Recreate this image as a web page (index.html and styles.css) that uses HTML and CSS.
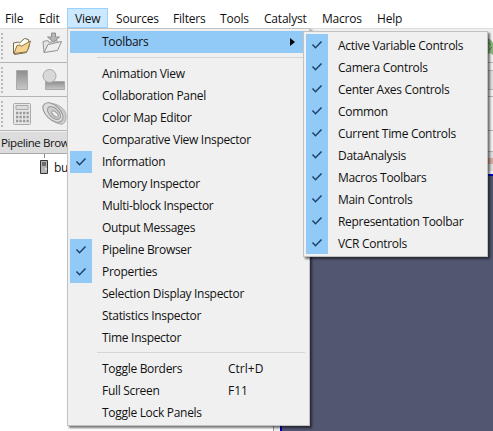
FILE: index.html
```html
<!DOCTYPE html>
<html lang="en">
<head>
<meta charset="utf-8">
<title>ParaView</title>
<link rel="stylesheet" href="styles.css">
</head>
<body>
<svg class="defs" width="0" height="0"><symbol id="check" viewBox="0 0 22 22"><path d="M6.5 10.500l3 3.200 6-6.200" fill="none" stroke="#1d4468" stroke-width="1.500"/></symbol></svg>
<div class="window">
  <nav class="menubar"><span class="m-file">File</span><span class="m-edit">Edit</span><span class="m-view">View</span><span class="m-sources">Sources</span><span class="m-filters">Filters</span><span class="m-tools">Tools</span><span class="m-catalyst">Catalyst</span><span class="m-macros">Macros</span><span class="m-help">Help</span></nav>
  <div class="toolbars">
    <div class="toolbar first"><i class="grip"></i>
      <svg width="20" height="20" viewBox="0 0 20 20"><path d="M1.500 17V7l5-1 1 1 5-4.500 4 1 1 6-3 7-12 2z" fill="#fffbed" stroke="#74684d"/><path d="M2 17.500l3-8 3-.5 1 1.500L18.500 5l-3 9.500-2 1.500z" fill="#f7d591" stroke="#8b744a"/></svg>
      <svg class="save" width="21" height="24" viewBox="0 0 21 24"><path d="M2 20.500l-1-11 5-1 1 2 8-2 1 3" fill="#e3e3e3" stroke="#999"/><path d="M2 20.500l4-8 13.500-3-4 9z" fill="#eee" stroke="#909090"/><path d="M9.500 1h4v4h4l-6 5-6-5h4z" fill="#b5b5b5" stroke="#8f8f8f"/></svg>
      <svg class="peek" width="5" height="20" viewBox="0 0 5 20"><path d="M0 2l3 2 2 3v12l-3-2-2 1z" fill="#8bb57e"/><path d="M0 6l3 3M1 14l3-3" stroke="#527c48"/></svg>
    </div>
    <div class="toolbar second"><i class="grip"></i>
      <svg width="20" height="24" viewBox="0 0 20 24"><defs><linearGradient id="g" x2="0" y2="1"><stop stop-color="#8d8d8d"/><stop offset="1" stop-color="#c8c8c8"/></linearGradient></defs><path d="M4.500 2.500h11v19h-11z" fill="url(#g)" stroke="#aaa"/></svg>
      <svg width="24" height="24" viewBox="0 0 24 24"><path d="M3.500 13.500h19v8h-19z" fill="url(#g)" stroke="#aaa"/><circle cx="7.500" cy="8" r="6.500" fill="#d8d8d8" stroke="#aaa"/></svg>
      <i class="edge"></i>
    </div>
    <div class="toolbar third"><i class="grip"></i>
      <svg width="20" height="24" viewBox="0 0 20 24"><rect x="1.500" y="1.500" width="17" height="21" rx="1" fill="#e8e8e8" stroke="#aaa"/><path d="M4 3.500h12v4H4z" fill="#ddd" stroke="#aaa"/><path d="M4 11h13M4 15h13M4 19h13" stroke="#999" stroke-width="2.500" stroke-dasharray="2.300 1.200"/></svg>
      <svg width="25" height="25" viewBox="0 0 25 25"><path d="M1 5C3-1 24 3 24 15c0 6-2 9-6 8C9 21 0 12 1 5z" fill="#ccc" stroke="#aaa"/><ellipse cx="11" cy="11.500" rx="12" ry="7" transform="rotate(43 11 11.500)" fill="#ddd" stroke="#999"/><ellipse cx="12" cy="12" rx="8" ry="4.500" transform="rotate(43 12 12)" fill="#ccc" stroke="#999"/><ellipse cx="13" cy="13" rx="4" ry="2" transform="rotate(43 13 13)" fill="#eee" stroke="#999"/></svg>
    </div>
  </div>
  <div class="workspace">
    <section class="dock"><header><span>Pipeline Browser</span></header><div class="tree"><svg width="10" height="22" viewBox="0 0 10 22"><path d="M5.500 0v4" stroke="#888"/><path d="M1.500 6.500h7v13h-7z" fill="#b5b5b5" stroke="#333"/><path d="M3 9h4M3 11h4" stroke="#222"/><path d="M6 15h2" stroke="#fff"/></svg><span>builtin:</span></div></section>
    <div class="splitter"></div>
    <section class="viewport"><div class="tabs"><i class="edge"></i></div><div class="canvas"></div></section>
  </div>
</div>
<div class="menu view-menu">
  <div class="item open"><span class="label">Toolbars</span><svg class="arrow" width="5" height="8" viewBox="0 0 5 8"><path d="M0 0l5 4-5 4z"/></svg></div>
  <hr class="top-rule">
  <div class="item"><span class="label">Animation View</span></div>
  <div class="item"><span class="label">Collaboration Panel</span></div>
  <div class="item"><span class="label">Color Map Editor</span></div>
  <div class="item"><span class="label">Comparative View Inspector</span></div>
  <div class="item"><svg class="check"><use href="#check"/></svg><span class="label">Information</span></div>
  <div class="item"><span class="label">Memory Inspector</span></div>
  <div class="item"><span class="label">Multi-block Inspector</span></div>
  <div class="item"><span class="label">Output Messages</span></div>
  <div class="item"><svg class="check"><use href="#check"/></svg><span class="label">Pipeline Browser</span></div>
  <div class="item"><svg class="check"><use href="#check"/></svg><span class="label">Properties</span></div>
  <div class="item"><span class="label">Selection Display Inspector</span></div>
  <div class="item"><span class="label">Statistics Inspector</span></div>
  <div class="item"><span class="label">Time Inspector</span></div>
  <hr class="bottom-rule">
  <div class="item"><span class="label">Toggle Borders</span><span class="shortcut">Ctrl+D</span></div>
  <div class="item"><span class="label">Full Screen</span><span class="shortcut">F11</span></div>
  <div class="item"><span class="label">Toggle Lock Panels</span></div>
</div>
<div class="menu submenu">
  <div class="item"><svg class="check"><use href="#check"/></svg><span class="label">Active Variable Controls</span></div>
  <div class="item"><svg class="check"><use href="#check"/></svg><span class="label">Camera Controls</span></div>
  <div class="item"><svg class="check"><use href="#check"/></svg><span class="label">Center Axes Controls</span></div>
  <div class="item"><svg class="check"><use href="#check"/></svg><span class="label">Common</span></div>
  <div class="item"><svg class="check"><use href="#check"/></svg><span class="label">Current Time Controls</span></div>
  <div class="item"><svg class="check"><use href="#check"/></svg><span class="label">DataAnalysis</span></div>
  <div class="item"><svg class="check"><use href="#check"/></svg><span class="label">Macros Toolbars</span></div>
  <div class="item"><svg class="check"><use href="#check"/></svg><span class="label">Main Controls</span></div>
  <div class="item"><svg class="check"><use href="#check"/></svg><span class="label">Representation Toolbar</span></div>
  <div class="item"><svg class="check"><use href="#check"/></svg><span class="label">VCR Controls</span></div>
</div>
</body>
</html>
```
FILE: styles.css
```css
* { box-sizing: border-box; }
body { margin: 0; width: 493px; height: 431px; overflow: hidden; position: relative; background: #fff; color: #111; font: 12px "Open Sans", sans-serif; letter-spacing: -.3px; white-space: nowrap; }
.defs { position: absolute; }
.window { display: flex; flex-direction: column; height: 431px; }
.menubar { display: flex; height: 29px; padding-top: 8px; border-bottom: 1px solid #ddd; line-height: 22px; letter-spacing: -.2px; }
.menubar span { padding-left: 5px; }
.m-file { width: 34px; }
.m-edit { width: 33px; }
.menubar .m-view { width: 41px; padding-left: 8px; background: #cce8ff; box-shadow: inset 0 0 0 1px #99d1ff; }
.menubar .m-sources { width: 60px; padding-left: 8px; }
.m-filters { width: 47px; }
.m-tools { width: 44px; }
.m-catalyst { width: 58px; }
.m-macros { width: 55px; }
.toolbars { background: #f0f0f0; height: 103px; }
.toolbar { display: flex; align-items: center; border-bottom: 1px solid #b5b5b5; }
.first, .second, .third { height: 34px; }
.grip { width: 2px; height: 26px; margin: 0 9px 0 1px; background: repeating-linear-gradient(#bbb 0 2px, transparent 2px 4px); }
.toolbar svg + svg { margin-left: 10px; }
.toolbar svg.save { margin-bottom: 3px; }
.toolbar svg.peek { margin-left: auto; }
.edge { width: 5px; height: 20px; margin-left: auto; border: 1px solid #b5b5b5; border-width: 1px 0; background: #ddd; }
.workspace { display: flex; flex: 1; }
.dock { width: 274px; border-right: 1px solid #999; }
.dock header { height: 22px; padding: 0 1px; background: #dcdcdc; border-bottom: 1px solid #aaa; line-height: 22px; font-size: 11.5px; letter-spacing: -.4px; }
.tree { display: flex; padding: 0 0 0 39px; gap: 5px; line-height: 27px; }
.splitter { width: 6px; background: #f0f0f0; }
.viewport { flex: 1; }
.tabs { display: flex; height: 42px; padding-top: 19px; background: #f0f0f0; }
.tabs .edge { border-bottom: 0; background: linear-gradient(#ddd 0 6px, #d3ab9f 6px 12px, #ddd 12px); }
.canvas { height: 257px; background: #525670; border: 2px solid #0000c0; border-right: 0; border-bottom: 0; }
.menu { position: absolute; background: #f0f0f0; border: 1px solid #c2c2c2; box-shadow: 2px 2px 2px #0008; }
.view-menu { left: 67px; top: 28px; width: 243px; height: 398px; padding: 2px; }
.submenu { left: 303px; top: 31px; width: 185px; height: 226px; padding: 2px; }
.item { display: flex; position: relative; height: 22px; line-height: 22px; padding-left: 32px; }
.submenu .item { line-height: 24px; }
.open { background: #91c9f7; }
.check { position: absolute; left: 0; top: 0; width: 22px; height: 22px; background: #91c9f7; }
.arrow { margin: 7px 12px 0 auto; }
.shortcut { position: absolute; left: 158px; letter-spacing: 0; }
hr { height: 1px; border: 0; background: #d5d5d5; margin: 4px 2px 5px 27px; }
.bottom-rule { margin: 3px 2px 5px 27px; }
```
